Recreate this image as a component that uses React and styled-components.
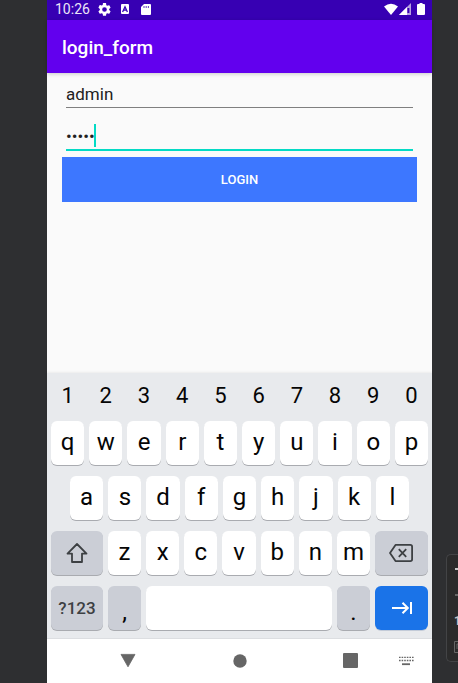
import React, { useState } from "react";
import styled, { createGlobalStyle } from "styled-components";

const GlobalStyle = createGlobalStyle`
  *, *::before, *::after { box-sizing: border-box; }
  body {
    margin: 0;
    background: #2e2f31;
    font-family: Roboto, "Liberation Sans", sans-serif;
  }
  button, input { font: inherit; }
  svg { display: block; flex: none; }
`;

const Desktop = styled.div`
  display: flex;
  min-height: 100vh;
  padding-left: 47px;
  overflow: hidden;
`;

const Phone = styled.div`
  flex: 1;
  min-width: 0;
  display: flex;
  flex-direction: column;
  background: #fafafa;
`;

const StatusBar = styled.div`
  display: flex;
  align-items: center;
  height: 20px;
  padding: 0 5px 2px 8px;
  background: #3700b3;
  color: #fff;
`;

const Clock = styled.span`
  flex: none;
  width: 43px;
  font-size: 14px;
  line-height: 18px;
  color: #ece6f8;
`;

const Notifications = styled.div`
  flex: 1;
  display: flex;
  align-items: center;
  gap: 8px;
`;

const Signals = styled.div`
  display: flex;
  align-items: center;
  gap: 1px;
`;

const AppBar = styled.header`
  display: flex;
  align-items: center;
  height: 53px;
  padding: 2px 15px 0;
  background: #6200ee;
  box-shadow: 0 1px 4px rgba(0, 0, 0, 0.2);
`;

const Title = styled.h1`
  margin: 0;
  color: #fff;
  font-size: 19px;
  font-weight: 500;
  line-height: 24px;
`;

const Form = styled.form`
  flex: 1;
  padding: 4px 15px 0;
`;

const Field = styled.div`
  position: relative;
  height: 42px;
  padding: 0 4px;
`;

const TextInput = styled.input`
  display: block;
  width: 100%;
  height: ${({ $active }) => ($active ? 32 : 31)}px;
  padding: 3px 0 0;
  border: 0;
  border-bottom: ${({ $active }) => ($active ? "2px solid #03dac5" : "1px solid #7f7f7f")};
  border-radius: 0;
  outline: 0;
  background: transparent;
  color: #212121;
  font-size: 17px;
  line-height: 24px;
`;

const Caret = styled.span`
  position: absolute;
  top: 5px;
  left: 32px;
  width: 2px;
  height: 23px;
  background: #03dac5;
`;

const LoginButton = styled.button`
  display: block;
  width: 100%;
  height: 45px;
  margin-top: -4px;
  padding: 0;
  border: 0;
  background: #3d77ff;
  color: #fff;
  font-size: 13px;
  font-weight: 500;
  line-height: 16px;
`;

const Keyboard = styled.section`
  display: flex;
  flex-direction: column;
  gap: 11px;
  padding: 5px 4px 8px;
  border-bottom: 1px solid #dcdee1;
  background: #e8eaed;
  box-shadow: 0 -1px 2px rgba(0, 0, 0, 0.06);
`;

const KeyRow = styled.div`
  display: flex;
  gap: 5px;
  padding: 0 ${({ $inset }) => $inset || 0}px;
`;

const Key = styled.button`
  flex: ${({ $width }) => ($width ? `0 0 ${$width}px` : "1 1 0")};
  min-width: 0;
  height: 44px;
  display: flex;
  align-items: center;
  justify-content: center;
  padding: 0 0 ${({ $lift }) => $lift || 0}px;
  border: 0;
  border-radius: 6px;
  background: ${({ $tone }) => ({ shade: "#cbced6", accent: "#1a73e8" })[$tone] || "#fff"};
  box-shadow: 0 1px 0 ${({ $tone }) => ($tone === "accent" ? "#c3cbd8" : "#a9abb0")};
  color: #050505;
  font-size: 24px;
  line-height: 28px;
`;

const NumberKey = styled(Key)`
  height: 32px;
  padding-top: 3px;
  background: transparent;
  box-shadow: none;
  font-size: 22px;
`;

const SymbolsKey = styled(Key)`
  color: #3d4043;
  font-size: 17px;
  font-weight: 500;
`;

const PunctuationKey = styled(Key)`
  align-items: flex-end;
  padding-bottom: 4px;
`;

const SystemNav = styled.nav`
  display: flex;
  align-items: center;
  justify-content: space-between;
  height: 44px;
  padding: 0 18px 1px 73px;
  background: #fff;
`;

const NavButton = styled.button`
  display: flex;
  align-items: center;
  justify-content: center;
  padding: 0;
  border: 0;
  background: transparent;
`;

const NavEnd = styled.div`
  display: flex;
  align-items: center;
  gap: 40px;
`;

const Gutter = styled.aside`
  flex: 0 0 26px;
  min-width: 0;
  display: flex;
  flex-direction: column;
  justify-content: flex-end;
  padding: 0 0 21px 14px;
`;

const ToolPanel = styled.div`
  display: flex;
  flex-direction: column;
  justify-content: space-between;
  height: 108px;
  padding: 7px 0 6px 7px;
  overflow: hidden;
  border: 1px solid #434446;
  border-right: 0;
  border-radius: 5px 0 0 5px;
  background: #2b2b2b;
`;

const ToolButton = styled.button`
  width: 16px;
  height: 16px;
  flex: none;
  padding: 0;
  border: 0;
  background: transparent;
  color: #c5c5c5;
  font-size: 12px;
  font-weight: 700;
  line-height: 16px;
  text-align: left;
`;

const GearIcon = () => (
  <svg width="13" height="13" viewBox="2 2 20 20" fill="#fff">
    <path d="M19.14 12.94a7.5 7.5 0 0 0 0-1.88l2.03-1.58a.5.5 0 0 0 .12-.61l-1.92-3.32a.49.49 0 0 0-.59-.22l-2.39.96a7 7 0 0 0-1.62-.94l-.36-2.54A.48.48 0 0 0 13.93 2h-3.86a.48.48 0 0 0-.47.41l-.36 2.54a7.4 7.4 0 0 0-1.62.94l-2.39-.96a.48.48 0 0 0-.59.22L2.72 8.87a.48.48 0 0 0 .12.61l2.03 1.58a7.5 7.5 0 0 0 0 1.88l-2.03 1.58a.5.5 0 0 0-.12.61l1.92 3.32c.12.22.37.29.59.22l2.39-.96c.5.38 1.03.7 1.62.94l.36 2.54c.05.24.24.41.47.41h3.86c.24 0 .44-.17.47-.41l.36-2.54a7.3 7.3 0 0 0 1.62-.94l2.39.96c.22.08.47 0 .59-.22l1.92-3.32a.48.48 0 0 0-.12-.61zM12 15.6a3.6 3.6 0 1 1 0-7.2 3.6 3.6 0 0 1 0 7.2z" />
  </svg>
);

const DebugIcon = () => (
  <svg width="12" height="12" viewBox="0 0 12 12">
    <rect x="2" y="1" width="8" height="10" rx="1" fill="#fff" />
    <path d="M3.6 9L6 3.8L8.4 9M4.8 7.2h2.4" fill="none" stroke="#3700b3" strokeWidth="1.3" />
  </svg>
);

const SdCardIcon = () => (
  <svg width="13" height="13" viewBox="0 0 13 13">
    <path d="M5 1h6q1 0 1 1v9q0 1-1 1H3q-1 0-1-1V4z" fill="#fff" />
    <path d="M5 3v2M7.2 3v2M9.4 3v2" stroke="#3700b3" strokeWidth=".8" />
  </svg>
);

const WifiIcon = () => (
  <svg width="14" height="13" viewBox="0 0 14 13">
    <path d="M0 3.6Q7-2 14 3.6L7 12z" fill="#fff" />
  </svg>
);

const CellIcon = () => (
  <svg width="14" height="13" viewBox="0 0 14 13">
    <path d="M0 12L12 0V12z" fill="#b7a0e2" />
    <path d="M0 12L8 4v8z" fill="#fff" />
    <path d="M8.4 5h2v5h-2z" fill="#3700b3" />
  </svg>
);

const BatteryIcon = () => (
  <svg width="13" height="13" viewBox="0 0 13 13">
    <path d="M5.5 0h3v1H10q1 0 1 1v9q0 1-1 1H4q-1 0-1-1V2q0-1 1-1h1.5z" fill="#fff" />
  </svg>
);

const ShiftIcon = () => (
  <svg width="24" height="24" viewBox="0 0 24 24" fill="none" stroke="#3d4043" strokeWidth="1.8" strokeLinejoin="round">
    <path d="M12 3L2.5 12.6H7V21h10v-8.4h4.5z" />
  </svg>
);

const BackspaceIcon = () => (
  <svg width="26" height="22" viewBox="0 0 26 22" fill="none" stroke="#3d4043" strokeWidth="1.8" strokeLinejoin="round">
    <path d="M7.5 2.9h14.8q1.8 0 1.8 1.8v12.6q0 1.8-1.8 1.8H7.5L2 11z" />
    <path d="M10.8 7.2l7.4 7.6M18.2 7.2l-7.4 7.6" />
  </svg>
);

const NextIcon = () => (
  <svg width="22" height="14" viewBox="0 0 22 14" fill="none" stroke="#fff" strokeWidth="2">
    <path d="M1 7h15.5M11.5 1.7L16.8 7l-5.3 5.3M20 1v12" />
  </svg>
);

const BackIcon = () => (
  <svg width="16" height="16" viewBox="0 0 16 16">
    <path d="M1 1.4h14L8 13.8z" fill="#666" stroke="#666" strokeWidth=".8" strokeLinejoin="round" />
  </svg>
);

const HomeIcon = () => (
  <svg width="14" height="14" viewBox="0 0 14 14">
    <circle cx="7" cy="7" r="6.7" fill="#666" />
  </svg>
);

const RecentsIcon = () => (
  <svg width="15" height="15" viewBox="0 0 15 15">
    <rect width="15" height="15" rx="1" fill="#666" />
  </svg>
);

const KeyboardIcon = () => (
  <svg width="16" height="10" viewBox="0 0 16 10" stroke="#666" strokeWidth="1.3">
    <path d="M1 1.4h15M1 4.5h15" strokeDasharray="1.6 1" />
    <path d="M4 8.2h8" strokeWidth="1.8" />
  </svg>
);

const FrameIcon = () => (
  <svg width="14" height="14" viewBox="0 0 14 14" fill="none" stroke="#666" strokeWidth="1">
    <path d="M.5 1.5h12v11H.5zM3 9V4h5" />
  </svg>
);

const DashIcon = ({ color }) => (
  <svg width="10" height="16" viewBox="0 0 10 16">
    <path d="M1 7h9" stroke={color} strokeWidth="2" />
  </svg>
);

export default function App() {
  const [user, setUser] = useState("admin");
  const [password, setPassword] = useState("admin");
  const letters = (text) => [...text].map((c) => <Key key={c} type="button" $lift={2}>{c}</Key>);

  return (
    <>
      <GlobalStyle />
      <Desktop>
        <Phone>
          <StatusBar>
            <Clock>10:26</Clock>
            <Notifications>
              <GearIcon />
              <DebugIcon />
              <SdCardIcon />
            </Notifications>
            <Signals>
              <WifiIcon />
              <CellIcon />
              <BatteryIcon />
            </Signals>
          </StatusBar>
          <AppBar>
            <Title>login_form</Title>
          </AppBar>
          <Form onSubmit={(e) => e.preventDefault()}>
            <Field>
              <TextInput aria-label="Username" value={user} onChange={(e) => setUser(e.target.value)} />
            </Field>
            <Field>
              <TextInput
                type="password"
                aria-label="Password"
                $active
                value={password}
                onChange={(e) => setPassword(e.target.value)}
              />
              <Caret />
            </Field>
            <LoginButton type="submit">LOGIN</LoginButton>
          </Form>
          <Keyboard aria-label="Keyboard">
            <KeyRow>
              {[..."1234567890"].map((n) => <NumberKey key={n} type="button">{n}</NumberKey>)}
            </KeyRow>
            <KeyRow>{letters("qwertyuiop")}</KeyRow>
            <KeyRow $inset={19}>{letters("asdfghjkl")}</KeyRow>
            <KeyRow>
              <Key type="button" $width={52} $tone="shade" aria-label="Shift"><ShiftIcon /></Key>
              {letters("zxcvbnm")}
              <Key type="button" $width={53} $tone="shade" aria-label="Backspace"><BackspaceIcon /></Key>
            </KeyRow>
            <KeyRow>
              <SymbolsKey type="button" $width={52} $tone="shade">?123</SymbolsKey>
              <PunctuationKey type="button" $width={33} $tone="shade">,</PunctuationKey>
              <Key type="button" aria-label="Space" />
              <PunctuationKey type="button" $width={33} $tone="shade">.</PunctuationKey>
              <Key type="button" $width={53} $tone="accent" aria-label="Next"><NextIcon /></Key>
            </KeyRow>
          </Keyboard>
          <SystemNav>
            <NavButton aria-label="Back"><BackIcon /></NavButton>
            <NavButton aria-label="Home"><HomeIcon /></NavButton>
            <NavEnd>
              <NavButton aria-label="Recents"><RecentsIcon /></NavButton>
              <NavButton aria-label="Switch keyboard"><KeyboardIcon /></NavButton>
            </NavEnd>
          </SystemNav>
        </Phone>
        <Gutter>
          <ToolPanel>
            <ToolButton aria-label="Zoom in"><DashIcon color="#c5c5c5" /></ToolButton>
            <ToolButton aria-label="Zoom out"><DashIcon color="#666" /></ToolButton>
            <ToolButton>1</ToolButton>
            <ToolButton aria-label="Fit"><FrameIcon /></ToolButton>
          </ToolPanel>
        </Gutter>
      </Desktop>
    </>
  );
}
